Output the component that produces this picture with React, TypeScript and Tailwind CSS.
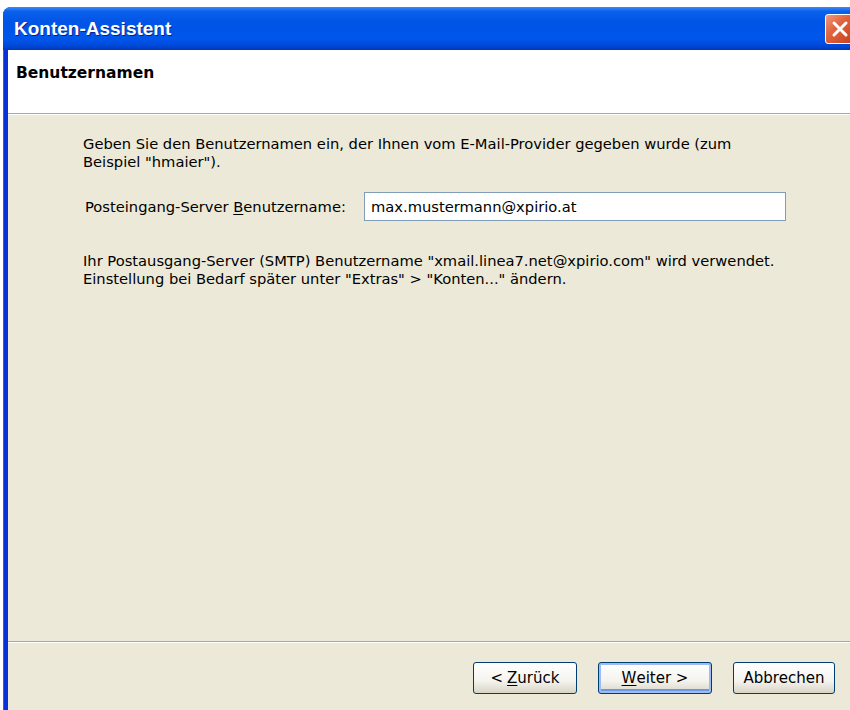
import React from "react";

const bodyFont = { fontFamily: '"DejaVu Sans", "Noto Sans", sans-serif' };

function XpButton({
  children,
  width,
  isDefault = false,
}: {
  children: React.ReactNode;
  width: string;
  isDefault?: boolean;
}) {
  return (
    <button
      type="button"
      className={
        isDefault
          ? "h-[32px] rounded-[3px] border border-[#003c74] bg-[linear-gradient(to_bottom,#ffffff_0%,#f4f3ee_60%,#d8d4c6_100%)] text-[15px] text-black shadow-[inset_0_0_0_2px_#9dbcf0,inset_0_-2px_0_2px_#6d96e3] flex items-center justify-center " +
            width
          : "h-[32px] rounded-[3px] border border-[#003c74] bg-[linear-gradient(to_bottom,#ffffff_0%,#f4f3ee_60%,#d8d4c6_100%)] text-[15px] text-black flex items-center justify-center " +
            width
      }
      style={bodyFont}
    >
      {children}
    </button>
  );
}

export default function App() {
  return (
    <div className="w-[850px] h-[710px] overflow-hidden bg-white" style={bodyFont}>
      {/* dialog window */}
      <div className="ml-[3px] mt-[7px] w-[860px] h-[703px] rounded-t-[8px] overflow-hidden flex flex-col bg-[#0831d9]">
        {/* title bar */}
        <div className="h-[43px] shrink-0 flex items-center bg-[linear-gradient(to_bottom,#3c8cf8_0%,#0a60ec_10%,#0054e6_35%,#0056ec_75%,#0046d4_92%,#0036b8_100%)]">
          <div
            className="flex-1 pl-[11px] pt-[2px] text-[19px] font-bold text-white [text-shadow:1px_1px_0_#0c1f8f]"
            style={{ fontFamily: '"Liberation Sans", Arial, sans-serif' }}
          >
            Konten-Assistent
          </div>
          <div className="mr-[8px] w-[30px] h-[30px] rounded-[3px] border border-white bg-[linear-gradient(135deg,#f09a7c_0%,#e0643e_40%,#c63f1c_100%)] flex items-center justify-center">
            <svg width="18" height="18" viewBox="0 0 18 18">
              <path d="M3 3 L15 15 M15 3 L3 15" stroke="white" strokeWidth="3" strokeLinecap="round" />
            </svg>
          </div>
        </div>

        {/* window frame */}
        <div className="flex-1 flex pl-[5px] pr-[5px] bg-[linear-gradient(to_right,#5a8cf0_0px,#0831d9_1px,#0831d9_100%)]">
          <div className="flex-1 flex flex-col bg-[#ece9d8]">
            {/* page header */}
            <div className="h-[63px] shrink-0 bg-white pl-[8px] pt-[12px] text-[15.5px] font-bold text-black">
              Benutzernamen
            </div>
            <div className="h-px bg-[#aca899]" />
            <div className="h-px bg-white" />

            {/* page body */}
            <div className="flex-1 pl-[75px] pr-[20px] pt-[20px] text-[14.7px] leading-[18px] text-black">
              <p className="whitespace-nowrap">
                Geben Sie den Benutzernamen ein, der Ihnen vom E-Mail-Provider gegeben wurde (zum
                <br />
                Beispiel "hmaier").
              </p>

              <div className="mt-[21px] flex items-center">
                <label className="ml-[2px] w-[279px] shrink-0 whitespace-nowrap">
                  Posteingang-Server <span className="underline underline-offset-2">B</span>enutzername:
                </label>
                <div className="w-[422px] h-[29px] border border-[#7f9db9] bg-white flex items-center pl-[6px]">
                  max.mustermann@xpirio.at
                </div>
              </div>

              <p className="mt-[31px] whitespace-nowrap">
                Ihr Postausgang-Server (SMTP) Benutzername "xmail.linea7.net@xpirio.com" wird verwendet.
                <br />
                Einstellung bei Bedarf später unter "Extras" &gt; "Konten..." ändern.
              </p>
            </div>

            {/* button row */}
            <div className="h-px bg-[#aca899]" />
            <div className="h-px bg-white" />
            <div className="h-[67px] shrink-0 flex items-start pt-[19px] pl-[465px] gap-[21px]">
              <XpButton width="w-[104px]">
                &lt; <span className="underline underline-offset-2 ml-[4px]">Z</span>urück
              </XpButton>
              <XpButton width="w-[114px]" isDefault>
                <span className="underline underline-offset-2">W</span>eiter &gt;
              </XpButton>
              <XpButton width="w-[102px]">Abbrechen</XpButton>
            </div>
          </div>
        </div>
      </div>
    </div>
  );
}
